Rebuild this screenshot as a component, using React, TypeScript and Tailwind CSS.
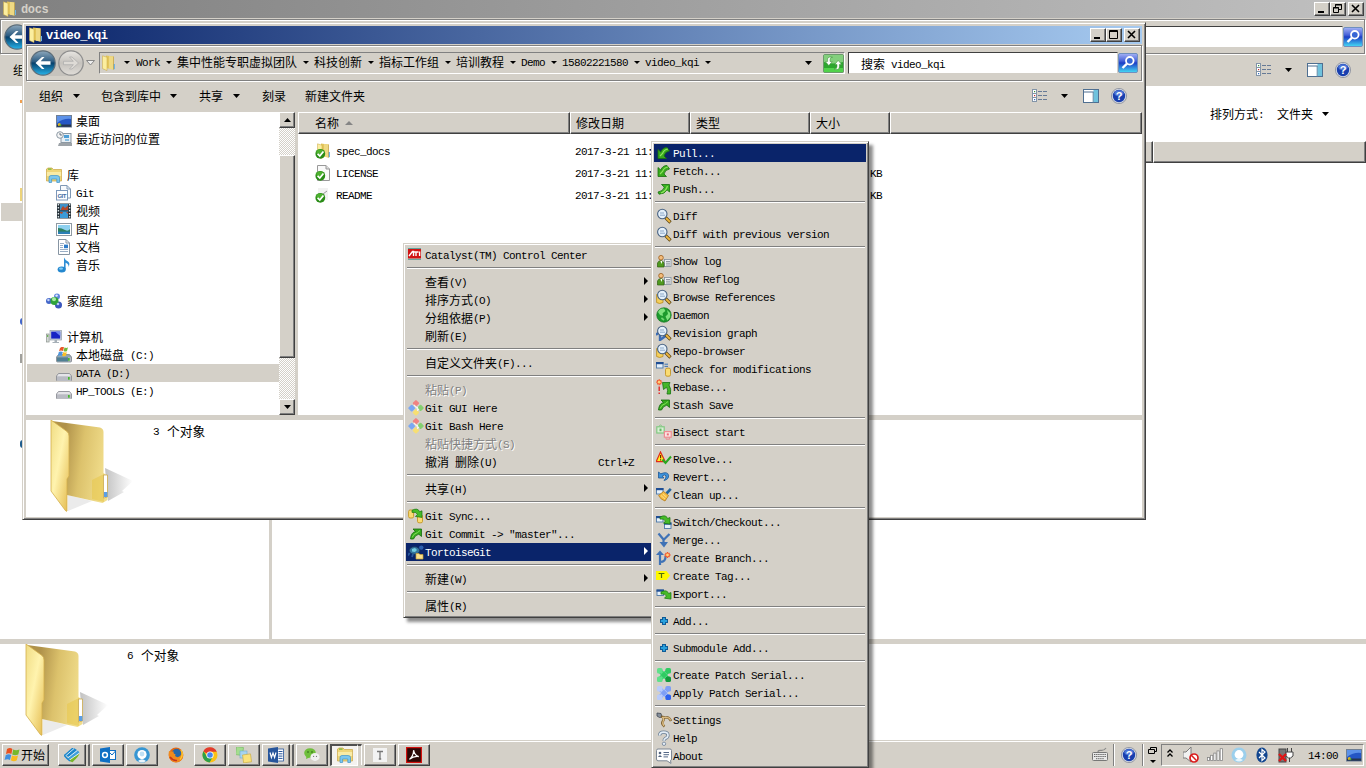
import React from "react";

const RAISED =
  "border border-t-white border-l-white border-r-[#404040] border-b-[#404040] shadow-[inset_-1px_-1px_0_#808080] bg-[#d4d0c8]";

function T({ children, bold = false }: { children: string; bold?: boolean }) {
  const runs = children.match(/[\u2e80-\uffef]+|[^\u2e80-\uffef]+/g) ?? [];
  return (
    <span className="whitespace-pre">
      {runs.map((r, i) =>
        /[\u2e80-\uffef]/.test(r) ? (
          <span key={i}>{r}</span>
        ) : (
          <span
            key={i}
            className={
              bold
                ? "font-['Liberation_Mono',monospace] text-[12px] tracking-[-0.35px] font-bold"
                : "align-[1px] font-['Liberation_Mono',monospace] text-[11px] leading-none tracking-[-0.6px]"
            }
          >
            {r}
          </span>
        )
      )}
    </span>
  );
}

function Svg({ children, size = 16 }: { children: React.ReactNode; size?: number }) {
  return (
    <svg width={size} height={size} viewBox="0 0 16 16" className="block shrink-0">
      {children}
    </svg>
  );
}

const Down = () => (
  <svg width="7" height="4" viewBox="0 0 7 4" className="block shrink-0">
    <path d="M0 0H7L3.5 4Z" fill="#000" />
  </svg>
);
const SmallDown = () => (
  <svg width="6" height="3" viewBox="0 0 6 3" className="block shrink-0">
    <path d="M0 0H6L3 3Z" fill="#000" />
  </svg>
);

/* ---------- file and tree icons ---------- */

const FolderBody = () => (
  <>
    <path d="M5 0.5L12.5 1.5V14.5L5 13Z" fill="#e3c65c" />
    <path d="M8 1L12.5 1.6V14.5L8 13.8Z" fill="#efd983" />
    <path d="M1.5 0.8L6 2.2V15.6L1.5 13.6Z" fill="#fbee9f" stroke="#c9a640" strokeWidth=".5" />
    <path d="M12.5 9H14V14L12.5 14.6Z" fill="#6fb4e6" />
    <path d="M12.5 1.5V14.5" stroke="#b8963a" strokeWidth=".6" />
  </>
);
const Folder = () => <Svg><FolderBody /></Svg>;
const Check = () => (
  <>
    <circle cx="5.3" cy="10.8" r="4.9" fill="#2a8c17" />
    <ellipse cx="5" cy="9" rx="3.6" ry="2.6" fill="#5cc03b" opacity=".7" />
    <path d="M2.6 10.8L4.8 13L8.4 8.4" fill="none" stroke="#fff" strokeWidth="1.7" />
  </>
);
const FolderCheck = () => <Svg><g transform="translate(1 0)"><FolderBody /></g><Check /></Svg>;
const FileCheck = () => (
  <Svg>
    <path d="M2.5 .5H11L14.5 4V15.5H2.5Z" fill="#fafafa" stroke="#999" />
    <path d="M11 .5V4H14.5" fill="#ddd" stroke="#999" />
    <Check />
  </Svg>
);
const ReadmeCheck = () => (
  <Svg><rect x="3" y="1" width="10" height="12" fill="#f2f2f2" /><path d="M8 7L12 4" stroke="#999" /><Check /></Svg>
);
const DesktopIcon = () => (
  <Svg>
    <rect x=".5" y="2.5" width="15" height="11.5" fill="#2456c4" stroke="#6f7f93" />
    <path d="M1 3H15V6Q8 5 1 10Z" fill="#5d92e8" />
    <rect x="1" y="11.5" width="14" height="2.3" fill="#27364f" />
    <circle cx="3.3" cy="11.6" r="1.5" fill="#e8b520" /><circle cx="4.4" cy="12.3" r="1" fill="#3fae3c" />
  </Svg>
);
const RecentIcon = () => (
  <Svg>
    <rect x="5" y="2.5" width="10" height="9" fill="#e6eef4" stroke="#8b98a3" />
    <rect x="8" y="4" width="5" height="3" fill="#4e9fd6" /><rect x="9" y="8" width="4" height="2" fill="#8abfe2" />
    <path d="M3 12H16V15H2Z" fill="#9da3a8" />
    <circle cx="4" cy="4" r="3.3" fill="#f4f4f4" stroke="#8d9aa5" /><path d="M4 2V4H6" fill="none" stroke="#456" strokeWidth=".8" />
  </Svg>
);
const LibraryIcon = () => (
  <Svg>
    <path d="M.5 2L2 1H6L7.5 2.5H15.5V14H.5Z" fill="#f0d678" stroke="#c8a544" strokeWidth=".7" />
    <rect x="2" y="1.6" width="3.5" height="1" fill="#59b531" />
    <path d="M.9 5H15.1V9H.9Z" fill="#f9eba6" />
    <path d="M3 15.5V10.5Q3 8.5 5 8.5H11Q13.5 8.5 13.5 10.5V15.5H10.8V12H5.6V15.5Z" fill="#7cc6ee" stroke="#3f93c9" strokeWidth=".7" />
  </Svg>
);
const GitLib = () => (
  <Svg>
    <path d="M4.5 .5H11L14.5 4V13H4.5Z" fill="#f7fafd" stroke="#7f98b4" />
    <path d="M11 .5V4H14.5" fill="none" stroke="#7f98b4" />
    <rect x=".5" y="5.5" width="11" height="9.5" fill="#fff" stroke="#7c98bb" />
    <text x="1.4" y="12.6" fontSize="6" fontWeight="bold" textLength="9" fill="#456ea3" fontFamily="Liberation Sans">GIT</text>
  </Svg>
);
const VideoIcon = () => (
  <Svg>
    <rect x="1" y=".5" width="14" height="15" fill="#27323a" />
    <rect x="4" y="1" width="8" height="6.4" fill="#3f91c9" /><rect x="4" y="8.4" width="8" height="6.6" fill="#3b9bd8" />
    <path d="M5 6L7 3L9 5L12 2.5V7H5ZM4 9H7L6 11L4 10ZM10 9H12V11Z" fill="#b4482b" />
    <path d="M2.4 1V15M13.6 1V15" stroke="#dde6ea" strokeWidth="1.4" strokeDasharray="1.5 1.5" />
  </Svg>
);
const PictureIcon = () => (
  <Svg>
    <rect x=".5" y="2.5" width="15" height="12" fill="#fff" stroke="#8f9aa3" />
    <rect x="2" y="4" width="12" height="9" fill="#8dd0ef" />
    <path d="M2 7Q6 7 9 9T14 8V11H2Z" fill="#2d8060" /><path d="M2 10.6H14V13H2Z" fill="#2b7fb6" />
  </Svg>
);
const DocIcon = () => (
  <Svg>
    <path d="M2.5 .5H10L13.5 4V15.5H2.5Z" fill="#fff" stroke="#8795a3" />
    <path d="M10 .5V4H13.5" fill="none" stroke="#8795a3" />
    <path d="M4 4.5H8M4 6.5H7M4 8.5H7M4 10.5H12M4 12.5H12" stroke="#8fa6bf" strokeWidth=".9" />
    <rect x="8" y="5.6" width="4" height="3.6" fill="#2e7cc9" />
  </Svg>
);
const MusicIcon = () => (
  <Svg>
    <path d="M8 .5Q9 3 12 4.5Q14.5 6 12.5 10Q13 7 9.6 5.8V12H8Z" fill="#2f8fd6" />
    <ellipse cx="5.7" cy="12.4" rx="4.1" ry="3" fill="#2488cf" /><ellipse cx="5" cy="11.6" rx="2" ry="1.2" fill="#84cbf4" />
  </Svg>
);
const HomeGroup = () => (
  <Svg>
    <circle cx="3" cy="8" r="3" fill="#4467c9" /><circle cx="11" cy="3.5" r="3" fill="#5f86dd" /><circle cx="12.5" cy="12" r="3.5" fill="#3b57be" />
    <circle cx="8.5" cy="8" r="4" fill="#2fa33a" /><circle cx="8" cy="6.2" r="2" fill="#a8e8a4" />
    <circle cx="2.4" cy="7" r="1.2" fill="#c3d4fa" /><circle cx="10.6" cy="2.6" r="1.2" fill="#e1eafd" /><circle cx="12" cy="11" r="1.3" fill="#b5c6f5" />
  </Svg>
);
const Computer = () => (
  <Svg>
    <rect x=".5" y="5" width="2.6" height="8" fill="#d5dad7" stroke="#8b938d" strokeWidth=".7" /><rect x="1.2" y="6" width="1" height="2" fill="#54aa3a" />
    <rect x="4" y="1.5" width="11.5" height="9.5" fill="#cfd6de" stroke="#929da8" strokeWidth=".7" />
    <rect x="5.2" y="2.6" width="9" height="7" fill="#1724c4" /><path d="M9 2.6H14.2V7Z" fill="#6f86ee" />
    <path d="M8.5 11H11V13H13V14H6.5V13H8.5Z" fill="#a7b0b8" />
  </Svg>
);
const DriveBody = ({ c = "#e4e4e8" }: { c?: string }) => (
  <>
    <path d="M2.5 7.5H13.5L15.5 10V14Q15.5 15 14.5 15H1.5Q.5 15 .5 14V10Z" fill={c} stroke="#80838a" strokeWidth=".8" />
    <path d="M1 10.3H15V14.4H1Z" fill="#b9bbc3" /><rect x="12" y="11" width="1.7" height="2.7" fill="#46b92d" />
  </>
);
const Drive = () => <Svg><g transform="translate(0 1)"><DriveBody /></g></Svg>;
const SysDrive = () => (
  <Svg>
    <DriveBody c="#8da7b4" /><path d="M1 10.3H12V14.4H1Z" fill="#507f93" />
    <path d="M4 1Q6 -1 8 .3L7 4Q5 3 3 4.3Z" fill="#e95728" /><path d="M8.5 .5Q10.5 1.5 12 .3L11 4Q9.4 5 7.6 4Z" fill="#73b83a" />
    <path d="M2.8 5Q5 3.8 6.8 5L5.8 8.8Q4 7.7 1.8 8.9Z" fill="#4d95dd" /><path d="M7.3 5Q9.3 6 10.8 5L10 8.8Q8 9.7 6.3 8.7Z" fill="#f7bf28" />
  </Svg>
);

/* ---------- toolbar icons ---------- */

const ViewIcon = () => (
  <Svg>
    {[1, 5, 9].map((y, i) => (
      <g key={y}>
        <rect x=".5" y={y + 0.5} width="4" height="4" fill="#fff" stroke="#8294a8" />
        <rect x="2" y={y + 2} width="1.2" height="1.2" fill={["#37953e", "#c52d2d", "#2f6bc0"][i]} />
        <path d={`M6 ${y + 2.5}H10M11 ${y + 2.5}H15`} stroke="#667a96" />
      </g>
    ))}
  </Svg>
);
const PaneIcon = () => (
  <Svg>
    <rect x=".5" y="1.5" width="15" height="13" fill="#fff" stroke="#4f6f91" />
    <path d="M1 4H15" stroke="#4f6f91" /><rect x="10.5" y="2" width="4.5" height="12" fill="#6fc2dd" />
    <path d="M10.2 4V14.5" stroke="#5c87a6" />
  </Svg>
);
const HelpBall = () => (
  <Svg>
    <circle cx="8" cy="8" r="7.6" fill="#d5dae4" stroke="#868c99" strokeWidth=".8" />
    <circle cx="8" cy="8" r="6.2" fill="#193fae" /><ellipse cx="8" cy="5.2" rx="4.6" ry="3" fill="#4b74d6" />
    <text x="8" y="12" fontSize="11" fontWeight="bold" textAnchor="middle" fill="#fff" fontFamily="Liberation Sans">?</text>
  </Svg>
);
const SearchButton = () => (
  <svg width="20" height="20" viewBox="0 0 20 20" className="block shrink-0">
    <defs>
      <linearGradient id="sg" x1="0" y1="0" x2="0" y2="1">
        <stop offset="0" stopColor="#a5b2f5" /><stop offset=".4" stopColor="#4460d8" /><stop offset=".5" stopColor="#1c3ec6" /><stop offset="1" stopColor="#45dcf5" />
      </linearGradient>
    </defs>
    <rect x=".5" y=".5" width="19" height="19" rx="1.5" fill="url(#sg)" stroke="#6f8fbf" />
    <circle cx="11.8" cy="7.8" r="3.8" fill="#3766d4" stroke="#fff" strokeWidth="1.8" />
    <path d="M9 10.6L4.5 15" stroke="#fff" strokeWidth="2.4" />
  </svg>
);
const RefreshButton = () => (
  <svg width="21" height="19" viewBox="0 0 21 19" className="block shrink-0">
    <rect x=".5" y=".5" width="20" height="18" rx="1.5" fill="#2ea62f" stroke="#6b9a6b" />
    <path d="M1 1H20V8Q10 11 1 8Z" fill="#83cf7c" /><path d="M1 14H20V18H1Z" fill="#51d24b" />
    <path d="M9.5 3.2Q7 3 7 5.5V7.5H9.2L5.8 11.6L2.4 7.5H4.6V5Q5 2.2 9.5 3.2Z" fill="#fff" stroke="#388d35" strokeWidth=".5" />
    <path d="M11 15Q14 15.5 14 12.5V10.5H11.8L15.2 6.4L18.6 10.5H16.4V13Q16 16.8 11 15Z" fill="#fff" stroke="#388d35" strokeWidth=".5" />
  </svg>
);
const NavBall = ({ active }: { active: boolean }) => (
  <svg width="26" height="26" viewBox="0 0 26 26" className="block shrink-0">
    <defs>
      <linearGradient id="nb" x1="0" y1="0" x2="0" y2="1">
        <stop offset="0" stopColor="#8fa9bd" /><stop offset=".45" stopColor="#2a5a80" /><stop offset=".5" stopColor="#07406b" /><stop offset="1" stopColor="#27b5ec" />
      </linearGradient>
      <linearGradient id="nf" x1="0" y1="0" x2="0" y2="1">
        <stop offset="0" stopColor="#e8e6e2" /><stop offset=".5" stopColor="#c5c2bd" /><stop offset="1" stopColor="#e0ddd8" />
      </linearGradient>
    </defs>
    <circle cx="13" cy="13" r="12.2" fill={active ? "url(#nb)" : "url(#nf)"} stroke={active ? "#5d6d79" : "#8e8e8e"} strokeWidth="1.2" />
    {active ? (
      <path d="M5.5 13L12 7H14.5L10.7 11.3H20.5V14.7H10.7L14.5 19H12Z" fill="#fff" />
    ) : (
      <path d="M20.5 13L14 7H11.5L15.3 11.3H5.5V14.7H15.3L11.5 19H14Z" fill="#dedbd6" stroke="#aaa" strokeWidth=".7" />
    )}
  </svg>
);

/* ---------- menu icons ---------- */

const GreenArrow = () => (
  <Svg>
    <path d="M2.5 13Q3 6.5 7.5 5.5L5 3H13.5V10.5L10.8 8.2Q7 9 5.5 13Z" fill="#35a81d" stroke="#146b0c" strokeWidth=".8" />
    <path d="M4.2 11.5Q5 7.8 9.5 6.6L12 4.5" fill="none" stroke="#86e25b" />
  </Svg>
);
const PullIcon = () => (
  <Svg>
    <path d="M2 4.5V13.5H10.5L8 11Q9 6.5 13.5 6L11 2.5Q6.5 2.5 4.8 7Z" fill="#38aa1d" stroke="#196f10" strokeWidth=".8" />
    <path d="M4 11L6.5 8.5Q8 4.5 12 4" fill="none" stroke="#8fe35e" strokeWidth="1.2" />
  </Svg>
);
const PushIcon = () => (
  <Svg>
    <path d="M5.5 3.5H13.5V11L11 8.8Q9 13 3 13.2L2 11Q7 10.5 8.3 6.2Z" fill="#38b321" stroke="#17700d" strokeWidth=".8" />
    <path d="M11.5 5Q10 10 5 12" fill="none" stroke="#8fe35e" strokeWidth="1.2" />
  </Svg>
);
const LensBody = () => (
  <>
    <path d="M9.5 9.5L14.5 14.5" stroke="#5e4715" strokeWidth="3.2" /><path d="M10 10L14 14" stroke="#edb53d" strokeWidth="1.8" />
    <circle cx="6.3" cy="6" r="4.7" fill="#e4f0fa" stroke="#4a6484" strokeWidth="1.1" />
    <path d="M4 5H8M4 7.2H9" stroke="#8ba7c8" />
  </>
);
const Lens = () => <Svg><LensBody /></Svg>;
const BrowseIcon = () => (
  <Svg><path d="M.6 5.5V13.5Q3.5 15.5 7 13.5V5.5Z" fill="#f6cf5a" stroke="#b78b1f" strokeWidth=".8" /><LensBody /></Svg>
);
const RevGraph = () => (
  <Svg><path d="M0 10L4 6M4 6V15L11 10" fill="none" stroke="#3a6cb5" strokeWidth="2.4" /><LensBody /></Svg>
);
const LogIcon = () => (
  <Svg>
    <rect x="8.5" y="6.5" width="6.5" height="7" fill="#eef1f4" stroke="#83909c" strokeWidth=".8" /><path d="M10 8.5H14M10 10.2H14M10 12H14" stroke="#77808a" strokeWidth=".8" />
    <path d="M1.5 14V10Q2.5 7.5 5 7.5Q7.5 8 8 10.5V14Z" fill="#4f9a1f" stroke="#2f5f10" strokeWidth=".7" />
    <circle cx="5" cy="4.7" r="2.3" fill="#f3bd7d" stroke="#9c5c1a" strokeWidth=".8" /><path d="M4.4 8L5.4 11L6.4 8Z" fill="#fff" />
  </Svg>
);
const Globe = () => (
  <Svg>
    <circle cx="8" cy="8" r="7.3" fill="#1d9a2d" stroke="#156b1f" strokeWidth=".6" />
    <path d="M2 5Q4 1 8 1.6L9.4 4L6.6 6.2L7 9L4 8ZM11 3L14.2 6V10L11.4 13.4L9.5 9.5L12 7Z" fill="#7fe27d" />
    <path d="M5.4 11L8 13" stroke="#70d56f" strokeWidth="1.6" />
  </Svg>
);
const Win = ({ x, y }: { x: number; y: number }) => (
  <g><rect x={x + 0.5} y={y + 0.5} width="6.5" height="5.5" fill="#e6f1fa" stroke="#4d78a8" strokeWidth=".9" /><rect x={x} y={y} width="7.5" height="2.2" fill="#1f4e94" /></g>
);
const Cyl = ({ x, y }: { x: number; y: number }) => (
  <rect x={x} y={y} width="5" height="8" rx="1.5" fill="#fadc72" stroke="#c39525" strokeWidth=".9" />
);
const CheckMod = () => <Svg><Win x={0} y={1} /><path d="M8.5 3.2H12M8.5 5.4H12" stroke="#3f74b5" /><Cyl x={9.5} y={7.2} /></Svg>;
const Spark = ({ x, y }: { x: number; y: number }) => (
  <g transform={`translate(${x} ${y})`}><path d="M-3 0H3M0-3V3M-2-2L2 2M2-2L-2 2" stroke="#f4562a" strokeWidth="1.3" /><circle r="1.4" fill="#ffd27a" /></g>
);
const Rebase = () => (
  <Svg><Spark x={3.2} y={3.2} /><path d="M3.2 7.5V12M3.2 13.4V15" stroke="#e32626" strokeWidth="1.4" />
    <path d="M6.5 3.5H14L13 6Q15.5 10 14.5 15H11Q12.5 11 10.6 8.2L7.5 10.5Z" fill="#45b629" stroke="#187311" strokeWidth=".8" /></Svg>
);
const Bisect = () => (
  <Svg><rect x=".8" y="2.8" width="7.4" height="6.2" fill="#d9f0d4" stroke="#82c982" strokeWidth="1.2" /><path d="M2.8 2.6Q4.5 -.6 6.2 2.6" fill="none" stroke="#82c982" /><rect x="3.5" y="4.6" width="2" height="2.6" fill="#65b765" />
    <rect x="8.4" y="7.6" width="6.8" height="5.6" fill="#fbe4e4" stroke="#ef8c92" strokeWidth="1.2" /><rect x="10.8" y="9.4" width="2" height="2" fill="#ec6e76" /><path d="M10 13.4V15.2H13.6V13.4" fill="none" stroke="#ef8c92" /></Svg>
);
const Resolve = () => (
  <Svg><path d="M4.5 1L9.2 10.6H.2Z" fill="#ffef20" stroke="#e02a18" strokeWidth="1.2" /><path d="M4.6 4V7.3M4.6 8.3V9.5" stroke="#6a2a00" strokeWidth="1.2" />
    <path d="M6.5 8.5L9.5 12L15 5.5" fill="none" stroke="#27a81f" strokeWidth="2" /></Svg>
);
const Revert = () => (
  <Svg><path d="M2.5 3V9H8L6.2 7Q9 5 10 6.8Q10.5 9 8 11.5Q13 10.5 12.6 6.2Q11.5 2 4.8 4.8Z" fill="#3d93dc" stroke="#1c5795" strokeWidth=".8" /></Svg>
);
const Clean = () => (
  <Svg><Win x={0} y={1} /><path d="M10.5 6.5L14.8 1.8" stroke="#23669f" strokeWidth="2.6" /><path d="M7.5 4.5L12.5 8.5L9 14Q4.5 12.5 2.6 8.5Z" fill="#f8be45" stroke="#b57815" strokeWidth=".8" /><path d="M5 8.5L9 12M7 7L10.5 10.2" stroke="#fbe496" strokeWidth=".8" /></Svg>
);
const Swap = ({ x, y }: { x: number; y: number }) => (
  <path transform={`translate(${x} ${y})`} d="M0 1.5Q6-1.5 7.6 3L10 2V8.6L3.5 7.7L5.4 5.6Q4.5 2.7 0 3.6Z" fill="#47bb28" stroke="#17720e" strokeWidth=".7" />
);
const Switch = () => <Svg><Win x={0} y={2} /><Win x={8} y={8.5} /><Swap x={4} y={1.5} /></Svg>;
const Export = () => <Svg><Win x={0.5} y={3.5} /><Swap x={5} y={4.5} /></Svg>;
const Merge = () => (
  <Svg><path d="M2.5 1.5L7.5 7.5V11.5M13.5 2L8 7.5" fill="none" stroke="#3f72b6" strokeWidth="2.2" /><path d="M3.5 10H12L8 15.5Z" fill="#3f72b6" /></Svg>
);
const Branch = () => (
  <Svg><path d="M4 15V4M4 12Q10 12 9.5 6" fill="none" stroke="#3f72b6" strokeWidth="2.2" /><path d="M0 5L4 .5L8 5Z" fill="#3f72b6" /><Spark x={11.5} y={5} /></Svg>
);
const Tag = () => (
  <Svg><path d="M0 3H10.5L14 7.5L10.5 12H0Z" fill="#fff800" /><path d="M2.6 5.5H8.4M5.5 5.5V10" stroke="#50700c" strokeWidth="1.2" /></Svg>
);
const Plus = () => (
  <Svg><path d="M6.5 4.5H9.5V6.5H11.5V9.5H9.5V11.5H6.5V9.5H4.5V6.5H6.5Z" fill="#29a0dc" stroke="#115b96" shapeRendering="crispEdges" /></Svg>
);
const Patch = ({ a, b, c }: { a: string; b: string; c: string }) => (
  <Svg>
    <path d="M1 4L4 1L15 12L12 15Z" fill={b} /><path d="M12 1L15 4L4 15L1 12Z" fill={b} />
    <rect x="1" y="1" width="5.6" height="5.6" rx="1.6" fill={a} /><rect x="9.4" y="1" width="5.6" height="5.6" rx="1.6" fill={b} />
    <rect x="1" y="9.4" width="5.6" height="5.6" rx="1.6" fill={a} /><rect x="9.4" y="9.4" width="5.6" height="5.6" rx="1.6" fill={c} />
    <path d="M8 4.2L11.8 8L8 11.8L4.2 8Z" fill={b} stroke={a} strokeWidth=".8" />
  </Svg>
);
const Settings = () => (
  <Svg><path d="M1 1L5 1.5L6 5L3.5 5.5L1 4Z" fill="#87909b" stroke="#3e4550" strokeWidth=".8" /><path d="M5 4.5Q9 6 7 9T8.5 14.5M6 4.5Q9 6 11 5.5T15 9" fill="none" stroke="#7b5d2b" strokeWidth="2.4" /><path d="M6 5Q8.6 6.5 7.2 9T8 14M7 5Q9 6 11 5.5Q14 5.5 14.6 8.5" fill="none" stroke="#dcbc82" strokeWidth="1.2" /></Svg>
);
const Help = () => (
  <Svg><path d="M3.6 5.5Q3.6 2.2 7.6 2.2Q12 2.2 12 5.4Q12 7.2 9.6 8.2Q8 9 8 10.8" fill="none" stroke="#6e8298" strokeWidth="3.2" /><path d="M3.6 5.5Q3.6 2.2 7.6 2.2Q12 2.2 12 5.4Q12 7.2 9.6 8.2Q8 9 8 10.8" fill="none" stroke="#e3edf6" strokeWidth="1.7" /><circle cx="8" cy="13.8" r="1.7" fill="#e3edf6" stroke="#6e8298" strokeWidth=".8" /></Svg>
);
const About = () => (
  <Svg><path d="M2 1H14Q15.5 1 15.5 2.5V11Q15.5 12.5 14.5 12.5L15 15.4L11 12.8H2Q.5 12.8 .5 11V2.5Q.5 1 2 1Z" fill="#fff" stroke="#7d8794" /><circle cx="4" cy="5" r="1.3" fill="#51627e" /><path d="M2 9Q4 5.5 6 9Z" fill="#51627e" /><path d="M7.5 4.5H13M7.5 6.7H13M7.5 8.9H12" stroke="#566988" /></Svg>
);
const Ati = () => (
  <Svg><rect x="0" y="1" width="13" height="1" fill="#5fa09a" /><rect x="0" y="2" width="13" height="9.5" fill="#d11313" /><path d="M0 12.4H13" stroke="#5fa09a" />
    <path d="M1 9L4.5 4.5H5.5V9M5.5 5H10.5M8 5V9M11.6 4.4V9" fill="none" stroke="#fff" strokeWidth="1.4" /></Svg>
);
const GitDiamond = () => (
  <Svg>
    <rect x="5.4" y=".8" width="5" height="5" rx="1" transform="rotate(45 8 3.3)" fill="#f18282" /><rect x="1" y="5.4" width="5.4" height="5.4" rx="1" transform="rotate(45 3.7 8.1)" fill="#7aa7f3" />
    <rect x="10" y="5.4" width="5" height="5" rx="1" transform="rotate(45 12.5 8)" fill="#84cf70" /><rect x="5.4" y="10" width="5" height="5" rx="1" transform="rotate(45 8 12.5)" fill="#f7df72" />
    <path d="M6 5L11 10M9.5 7V11" stroke="#f4f4f4" strokeWidth="1.1" />
  </Svg>
);
const Sync = () => <Svg><Cyl x={0.6} y={2} /><Cyl x={9.5} y={6.8} /><Swap x={4} y={.8} /></Svg>;
const Tortoise = () => (
  <Svg><ellipse cx="6.5" cy="6.5" rx="5.2" ry="3.8" fill="#35759d" stroke="#16345c" strokeWidth=".8" /><path d="M4 5L7 4L9 6L7 8L4 7.6Z" fill="#73cbe0" /><circle cx="13.3" cy="3.6" r="2.2" fill="#2c5fae" /><path d="M1.6 9L0 11.5M5 10L4 13" stroke="#2c5a9c" strokeWidth="1.8" /><path d="M8 9.5H11L12 10.5H15V15H8Z" fill="#fbe08b" stroke="#c79d35" strokeWidth=".7" /></Svg>
);

/* ---------- menus ---------- */

type Item = { t: string; i?: React.ReactNode; sub?: boolean; off?: boolean; hot?: boolean; key2?: string } | null;

function MenuRow({ item }: { item: Item }) {
  if (!item)
    return (
      <div className="h-[9px] px-px pt-[3px]">
        <div className="h-[2px] border-t border-t-[#808080] border-b border-b-white" />
      </div>
    );
  return (
    <div
      className={
        "flex h-[18px] items-center leading-[18px] " +
        (item.hot ? "bg-[#0a246a] text-white" : item.off ? "text-[#808080] [text-shadow:1px_1px_0_#fff]" : "text-black")
      }
    >
      <span className="ml-[2px] mr-px h-4 w-4 shrink-0">{item.i}</span>
      <T>{item.t}</T>
      <span className="grow" />
      {item.key2 && <span className="mr-[18px]"><T>{item.key2}</T></span>}
      {item.sub && (
        <svg width="4" height="8" viewBox="0 0 4 8" className="mr-[4px] mb-[2px] block">
          <path d="M0 0L4 4L0 8Z" fill={item.hot ? "#fff" : "#000"} />
        </svg>
      )}
    </div>
  );
}

const CONTEXT: Item[] = [
  { t: "Catalyst(TM) Control Center", i: <Ati /> }, null,
  { t: "查看(V)", sub: true }, { t: "排序方式(O)", sub: true }, { t: "分组依据(P)", sub: true }, { t: "刷新(E)" }, null,
  { t: "自定义文件夹(F)..." }, null,
  { t: "粘贴(P)", off: true }, { t: "Git GUI Here", i: <GitDiamond /> }, { t: "Git Bash Here", i: <GitDiamond /> },
  { t: "粘贴快捷方式(S)", off: true }, { t: "撤消 删除(U)", key2: "Ctrl+Z" }, null,
  { t: "共享(H)", sub: true }, null,
  { t: "Git Sync...", i: <Sync /> }, { t: 'Git Commit -> "master"...', i: <GreenArrow /> },
  { t: "TortoiseGit", i: <Tortoise />, sub: true, hot: true }, null,
  { t: "新建(W)", sub: true }, null,
  { t: "属性(R)" },
];

const SUBMENU: Item[] = [
  { t: "Pull...", i: <PullIcon />, hot: true }, { t: "Fetch...", i: <PullIcon /> }, { t: "Push...", i: <PushIcon /> }, null,
  { t: "Diff", i: <Lens /> }, { t: "Diff with previous version", i: <Lens /> }, null,
  { t: "Show log", i: <LogIcon /> }, { t: "Show Reflog", i: <LogIcon /> }, { t: "Browse References", i: <BrowseIcon /> },
  { t: "Daemon", i: <Globe /> }, { t: "Revision graph", i: <RevGraph /> }, { t: "Repo-browser", i: <BrowseIcon /> },
  { t: "Check for modifications", i: <CheckMod /> }, { t: "Rebase...", i: <Rebase /> }, { t: "Stash Save", i: <GreenArrow /> }, null,
  { t: "Bisect start", i: <Bisect /> }, null,
  { t: "Resolve...", i: <Resolve /> }, { t: "Revert...", i: <Revert /> }, { t: "Clean up...", i: <Clean /> }, null,
  { t: "Switch/Checkout...", i: <Switch /> }, { t: "Merge...", i: <Merge /> }, { t: "Create Branch...", i: <Branch /> },
  { t: "Create Tag...", i: <Tag /> }, { t: "Export...", i: <Export /> }, null,
  { t: "Add...", i: <Plus /> }, null,
  { t: "Submodule Add...", i: <Plus /> }, null,
  { t: "Create Patch Serial...", i: <Patch a="#5fe08a" b="#2fcb62" c="#129a3c" /> },
  { t: "Apply Patch Serial...", i: <Patch a="#b9cbfb" b="#7f9ff5" c="#2f62ee" /> }, null,
  { t: "Settings", i: <Settings /> }, { t: "Help", i: <Help /> }, { t: "About", i: <About /> },
];

/* ---------- window parts ---------- */

function CaptionButtons({ restore }: { restore?: boolean }) {
  const b = RAISED + " flex h-[14px] w-[16px] items-center justify-center";
  return (
    <div className="flex">
      <div className={b}>
        <svg width="14" height="12" viewBox="0 0 14 12"><path d="M3 9H9" stroke="#000" strokeWidth="2" /></svg>
      </div>
      <div className={b}>
        <svg width="14" height="12" viewBox="0 0 14 12">
          {restore ? (
            <path d="M4.5 4V1.5H10.5V6.5H8M4 2H11M2.5 4.5H7.5V9.5H2.5ZM2 5H8" fill="none" stroke="#000" />
          ) : (
            <path d="M2.5 1.5H10.5V9.5H2.5ZM2 2.5H11" fill="none" stroke="#000" />
          )}
        </svg>
      </div>
      <div className={b + " ml-[2px]"}>
        <svg width="14" height="12" viewBox="0 0 14 12"><path d="M3 2L10 9M10 2L3 9" stroke="#000" strokeWidth="1.6" /></svg>
      </div>
    </div>
  );
}

const ToolIcons = () => (
  <div className="ml-auto flex items-center">
    <ViewIcon />
    <span className="ml-[13px] mr-[15px]"><Down /></span>
    <PaneIcon />
    <span className="ml-[12px]"><HelpBall /></span>
  </div>
);

const BigFolder = () => (
  <svg width="90" height="94" viewBox="0 0 90 94" className="block shrink-0">
    <defs>
      <linearGradient id="bf1" x1="0" y1="0" x2="1" y2="1"><stop offset="0" stopColor="#f0dc84" /><stop offset=".45" stopColor="#fff3ae" /><stop offset="1" stopColor="#e3b94c" /></linearGradient>
      <linearGradient id="bf2" x1="0" y1="0" x2="1" y2=".2"><stop offset=".25" stopColor="#b0924a" /><stop offset=".6" stopColor="#dcc26c" /><stop offset="1" stopColor="#f0dc8a" /></linearGradient>
      <linearGradient id="bf3" x1="0" y1="0" x2="1" y2="0"><stop offset="0" stopColor="#a8a8a8" /><stop offset="1" stopColor="#fff" /></linearGradient>
    </defs>
    <path d="M55 48Q68 54 83 61L72 71L74 72L58 81Z" fill="url(#bf3)" opacity=".7" />
    <path d="M18 75L42 81L18 91Z" fill="#ddd" opacity=".6" />
    <path d="M2 1L50 7.5Q53.5 8.5 53.5 12V53L57.5 56V80L52.5 83L17 75Z" fill="url(#bf2)" />
    <path d="M42 60L54 54V82L42 79Z" fill="#e8c84f" opacity=".6" />
    <path d="M1 0L17 11.5Q19 13 19 16V56L17 59V91Q16 92 15 90L1 71Z" fill="url(#bf1)" stroke="#d3ae4b" strokeWidth=".8" />
    <path d="M53.5 55H57.5V77L53.5 78Z" fill="#fff" stroke="#c9a84f" strokeWidth=".8" /><rect x="54" y="72" width="3.4" height="5" fill="#5b9fe6" />
  </svg>
);

const DITHER = "bg-[conic-gradient(#fff_25%,#d4d0c8_0_50%,#fff_0_75%,#d4d0c8_0)] bg-[length:2px_2px]";

function Crumbs() {
  const parts = ["Work", "集中性能专职虚拟团队", "科技创新", "指标工作组", "培训教程", "Demo", "15802221580", "video_kqi"];
  return (
    <>
      {parts.map((p) => (
        <div key={p} className="flex items-center">
          <T>{p}</T>
          <span className="flex w-[17px] justify-center"><SmallDown /></span>
        </div>
      ))}
    </>
  );
}

type Node = { t: string; i: React.ReactNode; top?: boolean; sel?: boolean } | null;
const TREE: Node[] = [
  { t: "桌面", i: <DesktopIcon /> }, { t: "最近访问的位置", i: <RecentIcon /> }, null,
  { t: "库", i: <LibraryIcon />, top: true }, { t: "Git", i: <GitLib /> }, { t: "视频", i: <VideoIcon /> }, { t: "图片", i: <PictureIcon /> },
  { t: "文档", i: <DocIcon /> }, { t: "音乐", i: <MusicIcon /> }, null,
  { t: "家庭组", i: <HomeGroup />, top: true }, null,
  { t: "计算机", i: <Computer />, top: true }, { t: "本地磁盘 (C:)", i: <SysDrive /> }, { t: "DATA (D:)", i: <Drive />, sel: true }, { t: "HP_TOOLS (E:)", i: <Drive /> },
];

const HEAD = "flex items-center border-t border-l border-t-white border-l-white border-r border-b border-r-[#404040] border-b-[#404040] shadow-[inset_-1px_-1px_0_#808080] bg-[#d4d0c8] pl-[5px]";

function FrontWindow() {
  return (
    <div className="absolute left-[22px] top-[22px] flex h-[498px] w-[1124px] flex-col border border-[#d4d0c8] border-r-[#404040] border-b-[#404040] bg-[#d4d0c8] pb-[2px] pl-[3px] pr-[3px] pt-[3px] shadow-[inset_1px_1px_0_#fff,inset_-1px_-1px_0_#808080]">
      <div className="flex h-[18px] shrink-0 items-center bg-[linear-gradient(90deg,#0a246a,#a6caf0)] pl-[2px] pr-[2px] text-white">
        <Folder />
        <span className="ml-[2px] grow"><T bold>video_kqi</T></span>
        <CaptionButtons />
      </div>
      <div className="mt-px flex h-[36px] shrink-0 items-center border border-[#808080] border-b-[#808080] pl-[3px] shadow-[inset_1px_1px_0_#fff,1px_1px_0_#fff]">
        <div className="flex items-center gap-[2px] rounded-full bg-[#c6c3bd]"><NavBall active /><NavBall active={false} /></div>
        <svg width="9" height="6" viewBox="0 0 9 6" className="ml-[2px] block"><path d="M.5 .5H8.5L4.5 5Z" fill="#eee" stroke="#888" /></svg>
        <div className="ml-[4px] flex h-[22px] w-[746px] items-center border border-t-[#808080] border-l-[#808080] border-r-white border-b-white">
          <span className="mb-[1px] flex w-[36px] items-center pl-px"><Folder /><span className="ml-[7px]"><SmallDown /></span></span>
          <div className="mb-[2px] flex grow items-center"><Crumbs /></div>
          <span className="mr-[11px]"><Down /></span>
          <RefreshButton />
        </div>
        <div className="ml-[3px] flex h-[22px] w-[270px] items-center border border-t-[#404040] border-l-[#404040] border-r-[#d4d0c8] border-b-[#d4d0c8] bg-white pl-[12px] pt-[2px]">
          <T>搜索 video_kqi</T>
        </div>
        <SearchButton />
      </div>
      <div className="flex h-[30px] shrink-0 items-center pl-[13px] pr-[15px]">
        <T>组织</T><span className="ml-[10px] mr-[21px]"><Down /></span>
        <T>包含到库中</T><span className="ml-[9px] mr-[22px]"><Down /></span>
        <T>共享</T><span className="ml-[10px] mr-[22px]"><Down /></span>
        <T>刻录</T><span className="w-[19px]" /><T>新建文件夹</T>
        <ToolIcons />
      </div>
      <div className="mt-px flex h-[303px] shrink-0">
        <div className="w-[253px] bg-white">
          {TREE.map((n, i) =>
            n ? (
              <div key={i} className={"ml-px flex h-[18px] items-center " + (n.sel ? "bg-[#d4d0c8] " : "") + (n.top ? "pl-[19px]" : "pl-[29px]")}>
                {n.i}
                <span className={n.top ? "ml-[5px]" : "ml-[4px]"}><T>{n.t}</T></span>
              </div>
            ) : (
              <div key={i} className="h-[18px]" />
            )
          )}
        </div>
        <div className={"flex w-[16px] flex-col " + DITHER}>
          <div className={RAISED + " flex h-[16px] items-center justify-center"}><span className="rotate-180"><Down /></span></div>
          <div className="h-[27px]" />
          <div className={RAISED + " h-[203px]"} />
          <div className="grow" />
          <div className={RAISED + " flex h-[16px] items-center justify-center"}><Down /></div>
        </div>
        <div className="ml-[3px] flex grow flex-col bg-white">
          <div className="flex h-[22px]">
            <div className={HEAD + " w-[272px] pl-[16px]"}>
              <T>名称</T>
              <svg width="8" height="4" viewBox="0 0 8 4" className="ml-[6px]"><path d="M0 4H8L4 0Z" fill="#858585" /></svg>
            </div>
            <div className={HEAD + " w-[120px]"}><T>修改日期</T></div>
            <div className={HEAD + " w-[120px]"}><T>类型</T></div>
            <div className={HEAD + " w-[80px]"}><T>大小</T></div>
            <div className={HEAD + " grow"} />
          </div>
          <div className="flex flex-col pt-[6px]">
            {[
              { n: "spec_docs", i: <FolderCheck />, s: "" },
              { n: "LICENSE", i: <FileCheck />, s: "KB" },
              { n: "README", i: <ReadmeCheck />, s: "KB" },
            ].map((f) => (
              <div key={f.n} className="flex h-[22px] items-center">
                <div className="flex w-[277px] items-center gap-[5px] pl-[17px]">{f.i}<T>{f.n}</T></div>
                <div className="w-[240px]"><T>2017-3-21 11:</T></div>
                <div className="w-[67px] text-right"><T>{f.s}</T></div>
              </div>
            ))}
          </div>
        </div>
      </div>
      <div className="mt-[5px] flex grow bg-white pl-[24px]">
        <BigFolder />
        <span className="ml-[13px] flex gap-[2px] pt-[2px] text-[12.7px] leading-[18px]"><T>{"3 "}</T><T>个对象</T></span>
      </div>
    </div>
  );
}

function BackWindow() {
  return (
    <div className="flex h-[740px] w-full shrink-0 flex-col bg-[#d4d0c8]">
      <div className="flex h-[18px] shrink-0 items-center bg-[linear-gradient(90deg,#808080,#c0c0c0)] pl-[2px] pr-[2px] text-[#d4d0c8]">
        <Folder />
        <span className="ml-[3px] grow"><T bold>docs</T></span>
        <CaptionButtons restore />
      </div>
      <div className="mr-px mt-px flex h-[35px] shrink-0 items-center border border-[#808080] pl-[3px] shadow-[inset_1px_1px_0_#fff,1px_1px_0_#fff]">
        <NavBall active />
        <div className="ml-auto h-[22px] w-[494px] border border-t-[#404040] border-l-[#404040] border-r-[#d4d0c8] border-b-[#d4d0c8] bg-white" />
        <span className="mr-px"><SearchButton /></span>
      </div>
      <div className="flex h-[32px] shrink-0 items-center pl-[13px] pr-[15px]">
        <T>组织</T>
        <ToolIcons />
      </div>
      <div className="flex h-[553px] shrink-0">
        <div className="w-[269px] bg-white">
          <div className="flex h-full flex-col">
            <div className="ml-[20px] mt-[14px] h-[3px] w-[4px] bg-[#f0a050]" />
            <div className="ml-[20px] mt-[85px] h-[13px] w-[4px] bg-[#ecd37a]" />
            <div className="ml-px mt-[2px] h-[18px] bg-[#d4d0c8]" />
            <div className="ml-[20px] mt-[97px] h-[7px] w-[6px] rounded-full bg-[#4467c9]" />
            <div className="ml-[20px] mt-[29px] h-[9px] w-[4px] bg-[#a0a09c]" />
            <div className="ml-[20px] mt-[77px] h-[8px] w-[6px] rounded-full bg-[#1f5d8e]" />
          </div>
        </div>
        <div className="ml-[3px] flex grow flex-col bg-white">
          <div className="flex h-[55px] items-center justify-end pr-[37px]">
            <T>排列方式:</T><span className="w-[13px]" /><T>文件夹</T><span className="ml-[9px]"><Down /></span>
          </div>
          <div className="flex h-[22px]">
            <div className={HEAD + " w-[881px]"} />
            <div className={HEAD + " grow"} />
          </div>
        </div>
      </div>
      <div className="mt-[5px] flex grow bg-white pl-[25px]">
        <BigFolder />
        <span className="ml-[12px] flex gap-[2px] pt-[2px] text-[12.7px] leading-[18px]"><T>{"6 "}</T><T>个对象</T></span>
      </div>
    </div>
  );
}

/* ---------- taskbar ---------- */

const WinFlag = () => (
  <Svg><path d="M3 2Q6 0 8.4 2L7.4 7Q5 5.3 2 7Z" fill="#e9511f" /><path d="M9.2 2.4Q12 4 15.5 2.4L14.3 7.4Q11 9 8.2 7.4Z" fill="#75b82b" /><path d="M1.8 8Q5 6.3 7.2 8L6 13Q3.5 11.3 .5 13Z" fill="#3f8fdf" /><path d="M8 8.4Q11 10 14 8.4L12.8 13.3Q10 15 6.8 13.3Z" fill="#f9bb1d" /></Svg>
);
const Mobile = () => (
  <Svg><path d="M0 8L8 1Q10 .5 13 3L5 10Z" fill="#1b87cc" /><path d="M3 11L13 3Q15 4 15.6 6L7 13.5Z" fill="#3f9fdc" /><path d="M5 13L15.5 6.5Q15 9 8.5 15.2Q6 15 5 13Z" fill="#78b52a" /><path d="M1.5 9L10 1.6M3 11.5L13.5 3.4M5 13.4L15.5 6" stroke="#fff" strokeWidth=".8" /><path d="M0 8Q2 11 6 14" fill="none" stroke="#1b87cc" strokeWidth="1.4" /></Svg>
);
const Outlook = () => (
  <Svg><rect x="8" y="3.5" width="7.5" height="9" fill="#fff" stroke="#0f6fc4" /><path d="M8 4L12 8L15.5 4" fill="none" stroke="#0f6fc4" /><path d="M0 1.5L10 0V16L0 14.5Z" fill="#0f6fc4" /><circle cx="5" cy="8" r="2.4" fill="none" stroke="#fff" strokeWidth="1.5" /></Svg>
);
const QBlue = () => (
  <Svg><circle cx="8" cy="8" r="7.8" fill="#3796d3" /><circle cx="8" cy="7.6" r="4.6" fill="#fff" /><circle cx="8" cy="7" r="2.4" fill="#bfe0f4" /><path d="M4 14Q8 10.5 12 14Q8 17 4 14Z" fill="#e9f5fc" /></Svg>
);
const Firefox = () => (
  <Svg><circle cx="8" cy="8" r="7.4" fill="#e66a12" /><circle cx="8.6" cy="6.4" r="4.6" fill="#2768a8" /><path d="M1 4Q4 5 6 4.6Q4.6 6.4 7.6 7.2Q6 9.4 9.6 10.2Q13.5 9.6 14 4.6Q17 11 11.5 14.5Q5 17 1.6 11Q.2 7.5 1 4Z" fill="#f08a1d" /><path d="M13 3Q16 8 12 12.5" fill="none" stroke="#fbc930" strokeWidth="1.4" /><path d="M2 10Q5 14 9 13.4" fill="none" stroke="#c4331c" strokeWidth="1.5" /></Svg>
);
const Chrome = () => (
  <Svg><circle cx="8" cy="8" r="7.5" fill="#fbc116" /><path d="M8 8L1.3 4.4A7.5 7.5 0 0 1 14.8 4.8H8Z" fill="#e23b2e" /><path d="M1.5 4.2A7.5 7.5 0 0 0 7.6 15.5L11 9.6L8 8L5 9.6Z" fill="#2da04a" /><circle cx="8" cy="8" r="3.6" fill="#fff" /><circle cx="8" cy="8" r="2.8" fill="#4688f0" /></Svg>
);
const Stickies = () => (
  <Svg><rect x="0" y="0" width="7" height="8" fill="#a4dd8e" stroke="#70b85e" strokeWidth=".6" transform="rotate(8 3 4)" /><rect x="4" y="4" width="7" height="7" fill="#a7d4ef" stroke="#6eacd0" strokeWidth=".6" /><rect x="7" y="7.4" width="8" height="8" fill="#fbe27a" stroke="#c8a93d" strokeWidth=".6" transform="rotate(-8 11 11)" /></Svg>
);
const Word = () => (
  <Svg><rect x="8" y="2" width="7.5" height="12" fill="#fff" stroke="#27559b" strokeWidth=".8" /><path d="M10.5 4.5H14.5M10.5 6.8H14.5M10.5 9.1H14.5M10.5 11.4H14.5" stroke="#27559b" /><path d="M0 1.5L10 0V16L0 14.5Z" fill="#27559b" /><path d="M2 5.5L3.4 10.5L5 6L6.6 10.5L8 5.5" fill="none" stroke="#fff" strokeWidth="1.2" /></Svg>
);
const WeChat = () => (
  <Svg><ellipse cx="6" cy="6" rx="5.8" ry="4.8" fill="#6fbf3b" /><path d="M2.5 9L2 12L5.5 10.4Z" fill="#6fbf3b" /><circle cx="4" cy="5" r=".8" fill="#2b5c14" /><circle cx="8" cy="5" r=".8" fill="#2b5c14" /><ellipse cx="11" cy="10" rx="4.6" ry="3.9" fill="#f1f1f1" /><circle cx="9.6" cy="9.4" r=".6" fill="#777" /><circle cx="12.5" cy="9.4" r=".6" fill="#777" /></Svg>
);
const Typora = () => (
  <Svg><rect x="1" y="1" width="14" height="14" fill="#f3f3f3" /><path d="M5 4.5H11M8 4.5V12M6.8 12H9.2" stroke="#777" strokeWidth="1.3" /></Svg>
);
const Acrobat = () => (
  <Svg><rect x=".6" y=".6" width="14.8" height="14.8" fill="#2b0806" stroke="#d3120f" strokeWidth="1.2" /><path d="M3.4 12.4Q7.5 9 7.6 3.2Q8.5 8.5 12.8 9.6Q8 8.8 3.4 12.4Z" fill="none" stroke="#fff" strokeWidth="1.2" /></Svg>
);

function Task({ children, w, stack }: { children: React.ReactNode; w: string; stack?: boolean }) {
  return (
    <div className="flex">
      <div className={RAISED + " flex h-[22px] items-center justify-center " + w}>{children}</div>
      {stack && <div className="h-[22px] w-[4px] border-r-2 border-t border-r-[#606060] border-t-white" />}
    </div>
  );
}

function Taskbar() {
  return (
    <div className="flex h-[28px] shrink-0 items-center border-t border-t-[#d4d0c8] bg-[#d4d0c8] pl-[2px] pr-[2px] shadow-[inset_0_1px_0_#fff]">
      <div className={RAISED + " flex h-[22px] w-[47px] items-center pl-px"}>
        <WinFlag /><span className="ml-px"><T>开始</T></span>
      </div>
      <div className="ml-[9px] flex w-[372px] items-center">
        <Task w="w-[28px]" stack><Mobile /></Task>
        <span className="w-[2px]" />
        <Task w="w-[32px]"><Outlook /></Task>
        <span className="w-[2px]" />
        <Task w="w-[32px]"><QBlue /></Task>
        <span className="mx-[10px]"><Firefox /></span>
        <Task w="w-[32px]"><Chrome /></Task>
        <span className="w-[2px]" />
        <Task w="w-[32px]"><Stickies /></Task>
        <span className="w-[2px]" />
        <Task w="w-[28px]" stack><Word /></Task>
        <span className="w-[2px]" />
        <Task w="w-[32px]"><WeChat /></Task>
        <span className="w-[2px]" />
        <div className="flex h-[22px] w-[28px] items-center justify-center border-l-2 border-t-2 border-b border-r border-b-white border-l-[#505050] border-r-white border-t-[#505050] bg-[#f4f2ef]"><LibraryIcon /></div>
        <div className="mb-px h-[21px] w-[4px] border-r border-t-2 border-r-white border-t-[#505050]" />
        <span className="w-[2px]" />
        <Task w="w-[32px]"><Typora /></Task>
        <span className="w-[2px]" />
        <Task w="w-[32px]"><Acrobat /></Task>
      </div>
      <div className="ml-auto flex items-center">
        <Svg>
          <path d="M6 5Q6 3 9 3.4T14 1" fill="none" stroke="#8a8a8a" strokeWidth="1.2" /><rect x=".5" y="5.5" width="15" height="8" rx="1" fill="#e8e8e8" stroke="#777" />
          <path d="M2 7.5H14M2 9.5H14M4 11.7H12" stroke="#666" strokeDasharray="1.4 .7" />
        </Svg>
        <span className="ml-[5px] mr-[6px] h-[22px] w-[2px] border-l border-r border-l-[#808080] border-r-white" />
        <HelpBall />
        <span className="ml-[5px] h-[22px] w-[2px] border-l border-r border-l-[#808080] border-r-white" />
        <div className="ml-[4px] mr-[4px] flex w-[9px] flex-col items-center gap-[6px]">
          <svg width="9" height="7" viewBox="0 0 9 7"><path d="M2.5 2.5V.5H8.5V4.5H6.5M.5 2.5H6.5V6.5H.5Z" fill="none" stroke="#000" /></svg>
          <SmallDown />
        </div>
        <div className="flex h-[22px] w-[203px] items-center border border-b-white border-l-[#808080] border-r-white border-t-[#808080] pl-[5px]">
          <svg width="6" height="9" viewBox="0 0 6 9" className="mb-[2px]"><path d="M.5 3.5L3 1L5.5 3.5M.5 7.5L3 5L5.5 7.5" fill="none" stroke="#000" strokeWidth="1.3" /></svg>
          <span className="ml-[10px]"><Svg><path d="M0 5H3L8 0V15L3 11H0Z" fill="#f2f2f2" stroke="#7c7c7c" /><circle cx="11" cy="11" r="4" fill="#fff" stroke="#d91d1d" strokeWidth="1.7" /><path d="M8.3 8.3L13.7 13.7" stroke="#d91d1d" strokeWidth="1.5" /></Svg></span>
          <span className="ml-[8px]"><Svg>{[0, 1, 2, 3, 4].map((i) => <rect key={i} x={i * 3.2 + 0.4} y={10.5 - i * 2.2} width="2.2" height={3 + i * 2.2} fill="#fff" stroke="#858585" strokeWidth=".8" />)}</Svg></span>
          <span className="ml-[8px]"><Svg><circle cx="8" cy="8" r="7.5" fill="#9bcfec" /><circle cx="8" cy="7.5" r="4.4" fill="#fff" /><path d="M4 13Q8 10.5 12 13Q8 16 4 13Z" fill="#e6f5fc" /></Svg></span>
          <span className="ml-[7px]"><Svg><ellipse cx="8" cy="8" rx="5.6" ry="7.6" fill="#12468f" /><path d="M5 5L11 11L8 13.5V2.5L11 5L5 11" fill="none" stroke="#fff" strokeWidth="1.2" /></Svg></span>
          <span className="ml-[8px]"><Svg><rect x="1" y="2" width="7" height="13" fill="#777" stroke="#444" /><path d="M8 5H15V9L12.5 11H10.5L8 9ZM9.5 1V5M13.5 1V5M11.5 11V15" fill="#fff" stroke="#444" /><path d="M1 7L8 14M8 7L1 14" stroke="#e01616" strokeWidth="2.4" /></Svg></span>
          <span className="ml-[14px]"><T>14:00</T></span>
          <span className="ml-[8px]"><DesktopIcon /></span>
        </div>
      </div>
    </div>
  );
}

export default function App() {
  return (
    <div className="relative flex h-[768px] w-[1366px] flex-col overflow-hidden bg-white font-['Noto_Sans_CJK_SC',sans-serif] text-[12px] leading-[18px] text-black">
      <BackWindow />
      <Taskbar />
      <FrontWindow />
      <div className="absolute left-[403px] top-[243px] flex h-[375px] w-[254px] flex-col border border-[#d4d0c8] border-b-[#404040] bg-[#d4d0c8] pl-[2px] pt-[2px] pr-[4px] shadow-[inset_1px_1px_0_#fff,inset_0_-1px_0_#808080,4px_4px_3px_rgba(0,0,0,0.45)]">
        {CONTEXT.map((it, i) => <MenuRow key={i} item={it} />)}
      </div>
      <div className="absolute left-[651px] top-[141px] flex h-[627px] w-[218px] flex-col border border-[#d4d0c8] border-b-[#404040] border-r-[#404040] bg-[#d4d0c8] pl-[2px] pr-[2px] pt-[2px] shadow-[inset_1px_1px_0_#fff,inset_-1px_-1px_0_#808080,4px_4px_3px_rgba(0,0,0,0.45)]">
        {SUBMENU.map((it, i) => <MenuRow key={i} item={it} />)}
      </div>
    </div>
  );
}
